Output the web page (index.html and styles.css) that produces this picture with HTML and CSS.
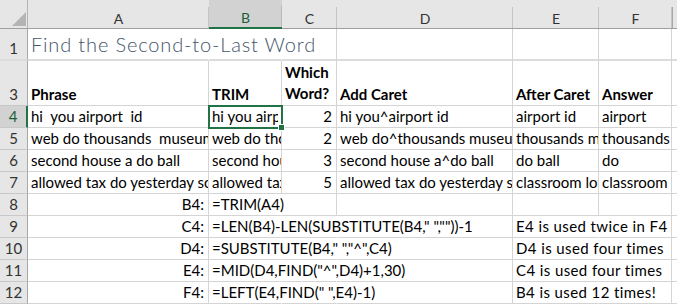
FILE: index.html
```html
<!DOCTYPE html>
<html lang="en">
<head>
    <meta charset="UTF-8">
    <title>Find the Second-to-Last Word</title>
    <link rel="stylesheet" href="styles.css">
</head>
<body>

<div class="sheet">
    <!-- column headers -->
    <div class="corner"><span class="corner-mark"></span></div>
    <div class="colhead">A</div>
    <div class="colhead active">B</div>
    <div class="colhead">C</div>
    <div class="colhead">D</div>
    <div class="colhead">E</div>
    <div class="colhead">F</div>
    <div class="colhead edge"></div>

    <!-- row 1 (row 2 is hidden) -->
    <div class="rowhead before-hidden">1</div>
    <div class="cell title spill before-hidden">Find the Second-to-Last Word</div>
    <div class="cell spill before-hidden"></div>
    <div class="cell before-hidden"></div>
    <div class="cell before-hidden"></div>
    <div class="cell before-hidden"></div>
    <div class="cell before-hidden"></div>
    <div class="cell before-hidden"></div>

    <!-- row 3 -->
    <div class="rowhead">3</div>
    <div class="cell bold">Phrase</div>
    <div class="cell bold">TRIM</div>
    <div class="cell bold wrap">Which Word?</div>
    <div class="cell bold">Add Caret</div>
    <div class="cell bold">After Caret</div>
    <div class="cell bold">Answer</div>
    <div class="cell"></div>

    <!-- rows 4-7: data -->
    <div class="rowhead active">4</div>
    <div class="cell">hi  you airport  id</div>
    <div class="cell selected"><span class="clip">hi you airport id</span></div>
    <div class="cell num">2</div>
    <div class="cell">hi you^airport id</div>
    <div class="cell">airport id</div>
    <div class="cell">airport</div>
    <div class="cell"></div>

    <div class="rowhead">5</div>
    <div class="cell">web do thousands  museum</div>
    <div class="cell">web do thousands museum</div>
    <div class="cell num">2</div>
    <div class="cell">web do^thousands museum</div>
    <div class="cell">thousands museum</div>
    <div class="cell">thousands</div>
    <div class="cell"></div>

    <div class="rowhead">6</div>
    <div class="cell">second house a do ball</div>
    <div class="cell">second house a do ball</div>
    <div class="cell num">3</div>
    <div class="cell">second house a^do ball</div>
    <div class="cell">do ball</div>
    <div class="cell">do</div>
    <div class="cell"></div>

    <div class="rowhead">7</div>
    <div class="cell">allowed tax do yesterday some classroom lot</div>
    <div class="cell">allowed tax do yesterday some classroom lot</div>
    <div class="cell num">5</div>
    <div class="cell">allowed tax do yesterday some classroom lot</div>
    <div class="cell">classroom lot</div>
    <div class="cell">classroom</div>
    <div class="cell"></div>

    <!-- rows 8-12: formulas and notes -->
    <div class="rowhead">8</div>
    <div class="cell num">B4:</div>
    <div class="cell spill">=TRIM(A4)</div>
    <div class="cell"></div>
    <div class="cell"></div>
    <div class="cell"></div>
    <div class="cell"></div>
    <div class="cell"></div>

    <div class="rowhead">9</div>
    <div class="cell num">C4:</div>
    <div class="cell spill">=LEN(B4)-LEN(SUBSTITUTE(B4," ",""))-1</div>
    <div class="cell spill"></div>
    <div class="cell"></div>
    <div class="cell spill note">E4 is used twice in F4</div>
    <div class="cell"></div>
    <div class="cell"></div>

    <div class="rowhead">10</div>
    <div class="cell num">D4:</div>
    <div class="cell spill">=SUBSTITUTE(B4," ","^",C4)</div>
    <div class="cell spill"></div>
    <div class="cell"></div>
    <div class="cell spill note">D4 is used four times</div>
    <div class="cell"></div>
    <div class="cell"></div>

    <div class="rowhead">11</div>
    <div class="cell num">E4:</div>
    <div class="cell spill">=MID(D4,FIND("^",D4)+1,30)</div>
    <div class="cell spill"></div>
    <div class="cell"></div>
    <div class="cell spill note">C4 is used four times</div>
    <div class="cell"></div>
    <div class="cell"></div>

    <div class="rowhead">12</div>
    <div class="cell num">F4:</div>
    <div class="cell spill">=LEFT(E4,FIND(" ",E4)-1)</div>
    <div class="cell spill"></div>
    <div class="cell"></div>
    <div class="cell spill note">B4 is used 12 times!</div>
    <div class="cell"></div>
    <div class="cell"></div>
</div>

</body>
</html>
```

FILE: styles.css
```css
body {
    margin: 0;
    background: #fff;
    font-family: Lato, "Open Sans", sans-serif;
    color: #000;
}

.sheet {
    display: grid;
    grid-template-columns: 28px 181px 73px 55px 176px 86px 73px 5px;
    grid-template-rows: 29px 32px 45px repeat(9, 22px);
    font-size: 15px;
}

/* headers */
.corner, .colhead, .rowhead {
    background: #e6e6e6;
    color: #333;
    box-sizing: border-box;
}

.corner {
    position: relative;
    border-right: 1px solid #b4b4b4;
    border-bottom: 1px solid #9f9f9f;
}

.corner-mark {
    position: absolute;
    left: 12px;
    top: 12px;
    width: 0;
    height: 0;
    border-left: 14px solid transparent;
    border-bottom: 14px solid #b4b4b4;
}

.colhead {
    display: flex;
    align-items: center;
    justify-content: center;
    padding-top: 8px;
    font-size: 14px;
    border-bottom: 1px solid #9f9f9f;
    background: linear-gradient(#c4c4c4, #c4c4c4) right bottom / 1px 21px no-repeat, #e6e6e6;
}

.colhead.active {
    background: linear-gradient(#b8b8b8, #b8b8b8) right bottom / 1px 21px no-repeat, #d2d2d2;
    color: #1d5e3a;
    border-bottom: 2px solid #217346;
}

.colhead.edge {
    background: linear-gradient(#a8a8a8, #a8a8a8) left bottom / 1px 21px no-repeat, #e6e6e6;
}

.rowhead {
    display: flex;
    align-items: flex-end;
    justify-content: center;
    padding-bottom: 1px;
    line-height: 20px;
    font-size: 15px;
    border-right: 1px solid #a8a8a8;
    border-bottom: 1px solid #c8c8c8;
}

.rowhead.active {
    background: #d2d2d2;
    color: #1d5e3a;
    border-right: 2px solid #217346;
}

/* cells */
.cell {
    display: flex;
    align-items: flex-end;
    box-sizing: border-box;
    padding: 0 3px 1px 3px;
    line-height: 20px;
    white-space: pre;
    overflow: hidden;
    border-right: 1px solid #d4d4d4;
    border-bottom: 1px solid #d4d4d4;
}

.spill {
    overflow: visible;
    border-right-color: transparent;
}

.before-hidden {
    border-bottom: 2px solid #dcdcdc;
}

.title {
    font-size: 20px;
    font-weight: 300;
    letter-spacing: 0.85px;
    color: #44546a;
    line-height: 26px;
    padding-bottom: 2px;
}

.note {
    letter-spacing: 0.4px;
}

.bold {
    font-weight: bold;
}

.wrap {
    white-space: normal;
    flex-direction: column;
    justify-content: flex-end;
    align-items: flex-start;
    line-height: 21px;
}

.num {
    justify-content: flex-end;
    padding-right: 4px;
}

.selected {
    position: relative;
    overflow: visible;
    outline: 2px solid #217346;
    outline-offset: -1px;
}

.clip {
    overflow: hidden;
}

.selected::after {
    content: "";
    position: absolute;
    right: -4px;
    bottom: -4px;
    width: 5px;
    height: 5px;
    background: #217346;
    border: 1px solid #fff;
}
```
